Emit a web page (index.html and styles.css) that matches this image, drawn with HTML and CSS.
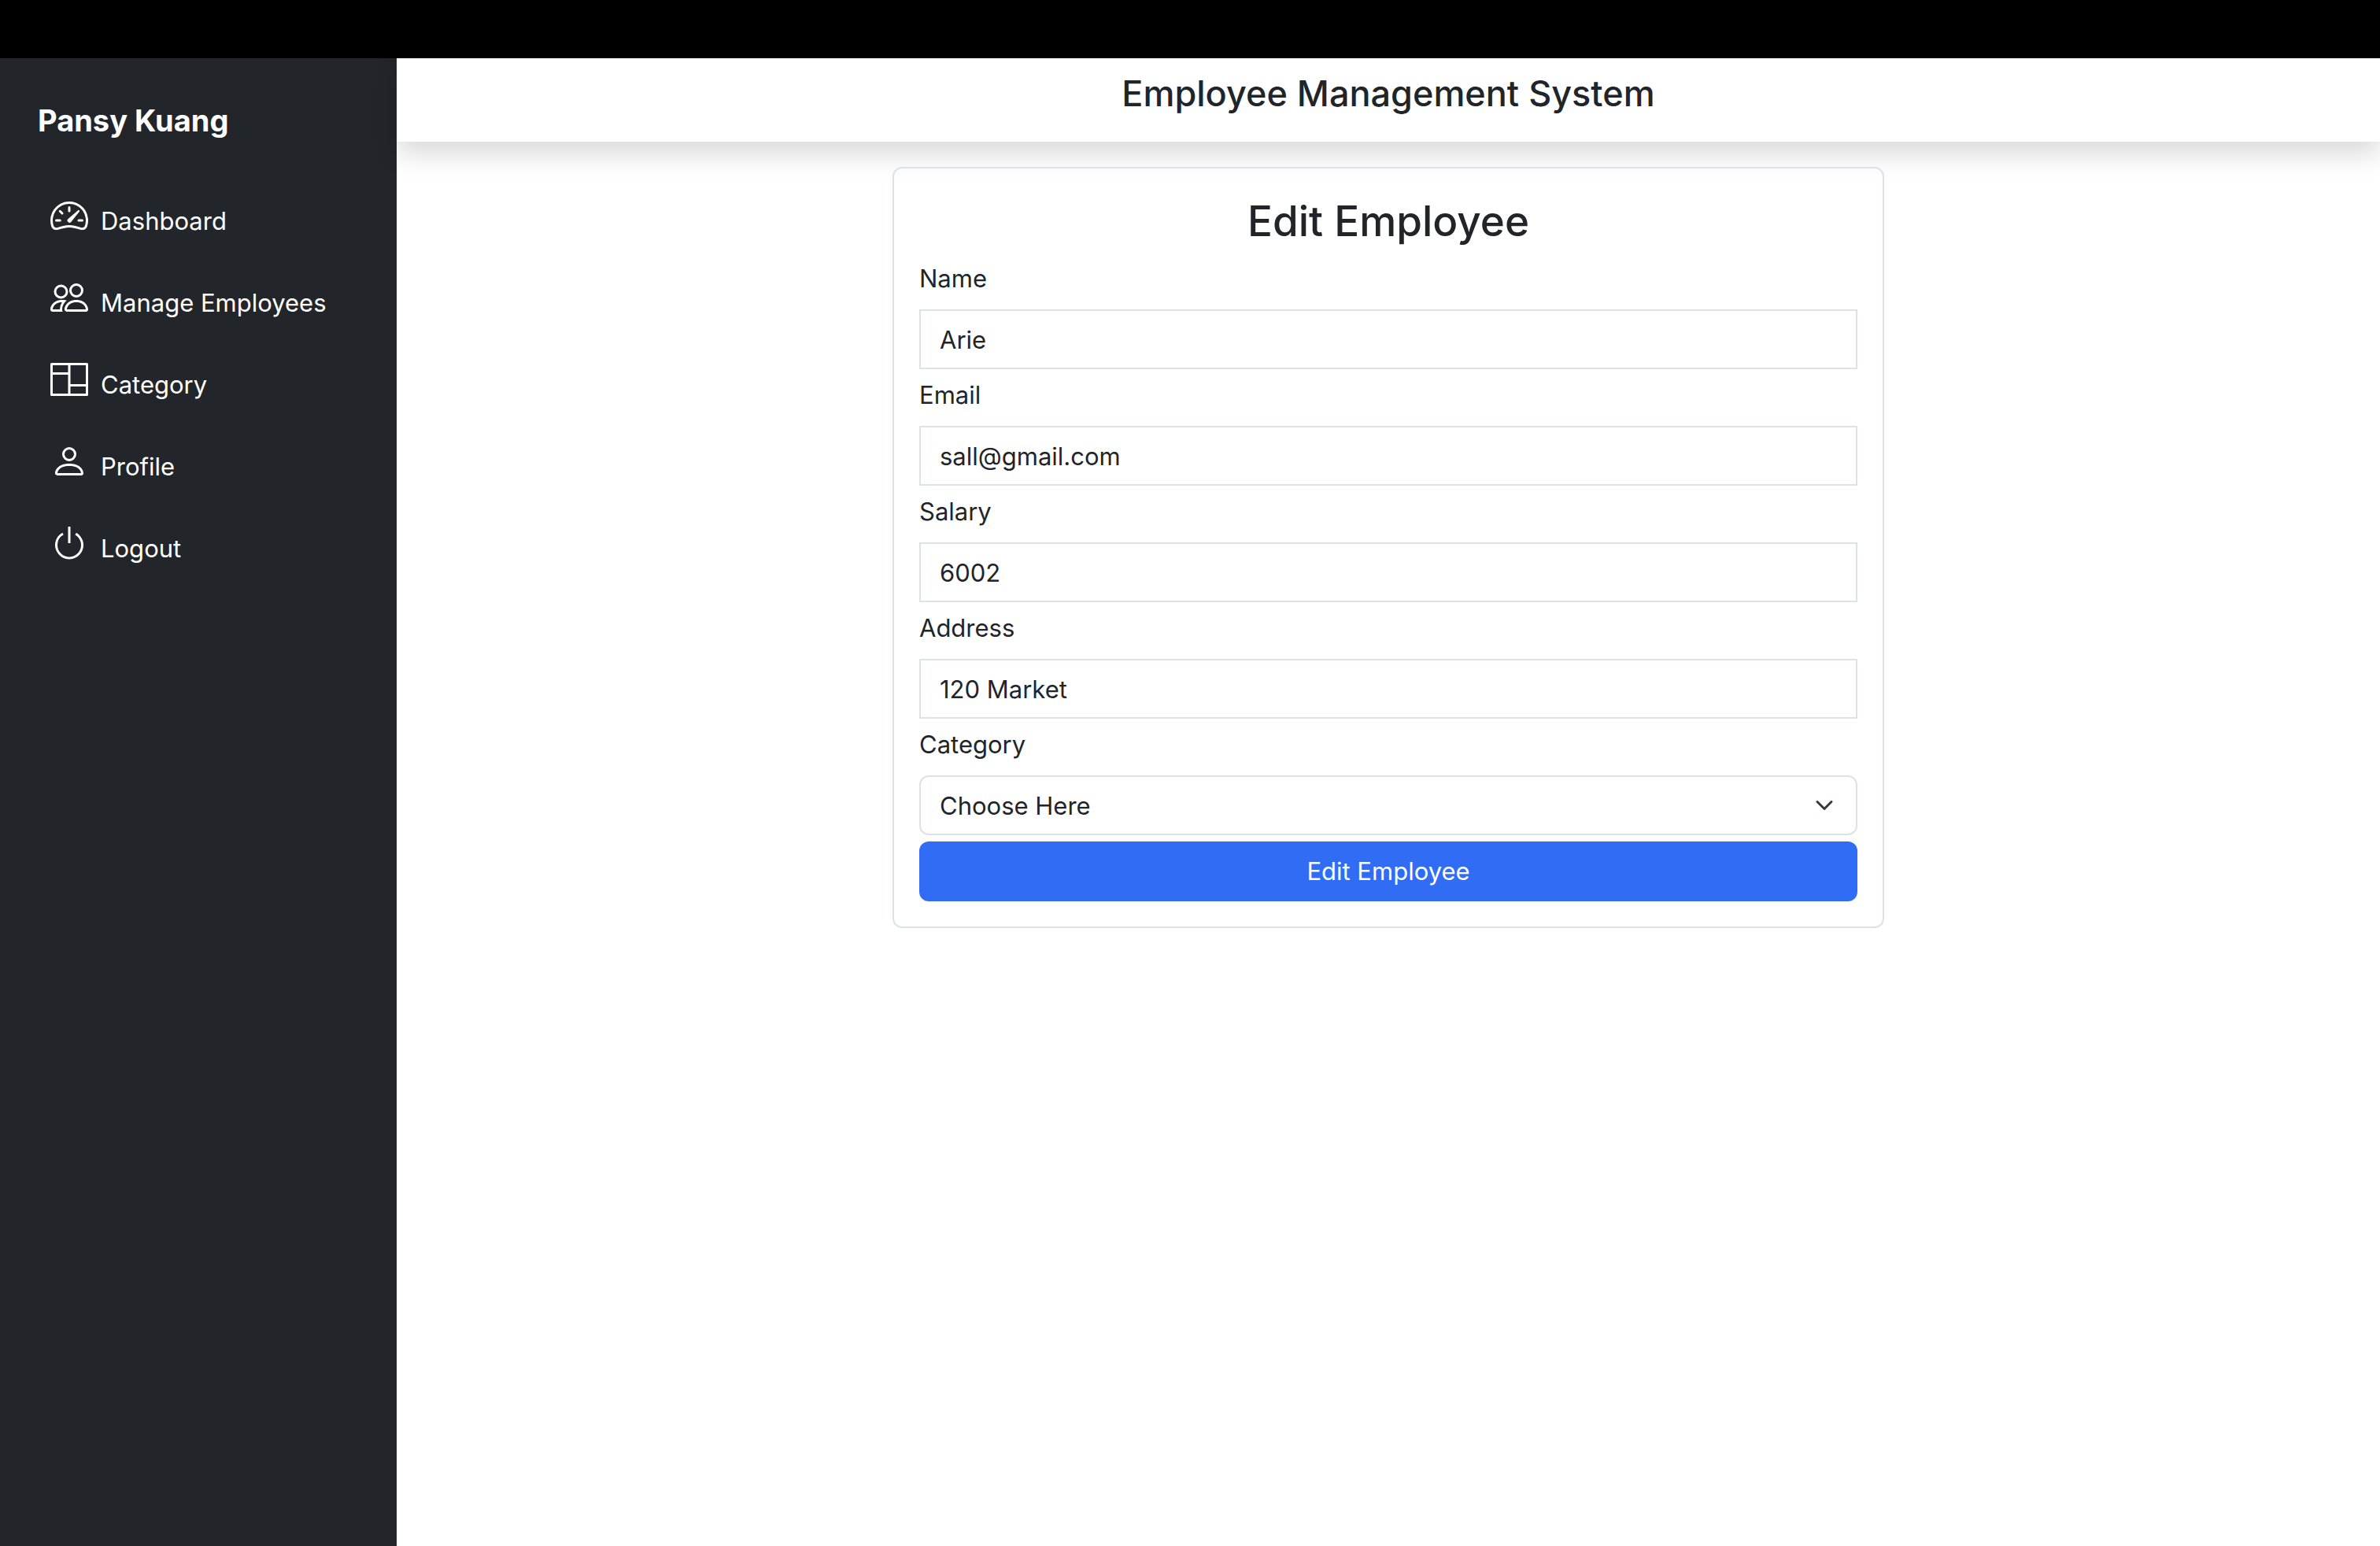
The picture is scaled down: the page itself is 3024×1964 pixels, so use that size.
FILE: index.html
```html
<!DOCTYPE html>
<html lang="en">
<head>
<meta charset="utf-8">
<title>Employee Management System</title>
<link rel="stylesheet" href="styles.css">
</head>
<body>
<div class="topbar"></div>
<div class="layout">
  <aside class="sidebar">
    <a class="brand" href="#">Pansy Kuang</a>
    <nav>
      <ul class="menu">
        <li><a class="menu-link" href="#">
          <svg class="icon" viewBox="0 0 16 16" aria-hidden="true"><path d="M8 4a.5.5 0 0 1 .5.5V6a.5.5 0 0 1-1 0V4.500A.5.5 0 0 1 8 4M3.732 5.732a.5.5 0 0 1 .707 0l.915.914a.5.5 0 1 1-.708.708l-.914-.915a.5.5 0 0 1 0-.707M2 10a.5.5 0 0 1 .5-.5h1.586a.5.5 0 0 1 0 1H2.500A.5.5 0 0 1 2 10m9.500 0a.5.5 0 0 1 .5-.5h1.500a.5.5 0 0 1 0 1H12a.5.5 0 0 1-.5-.5m.754-4.246a.39.39 0 0 0-.527-.02L7.547 9.310a.91.91 0 1 0 1.302 1.258l3.434-4.297a.39.39 0 0 0-.029-.518z"/><path fill-rule="evenodd" d="M0 10a8 8 0 1 1 15.547 2.661c-.442 1.253-1.845 1.602-2.932 1.250C11.309 13.488 9.475 13 8 13c-1.474 0-3.310.488-4.615.911-1.087.352-2.490.003-2.932-1.250A8 8 0 0 1 0 10m8-7a7 7 0 0 0-6.603 9.329c.203.575.923.876 1.680.630C4.397 12.533 6.358 12 8 12s3.604.532 4.923.960c.757.245 1.477-.056 1.680-.631A7 7 0 0 0 8 3"/></svg>
          <span class="menu-text">Dashboard</span></a></li>
        <li><a class="menu-link" href="#">
          <svg class="icon" viewBox="0 0 16 16" aria-hidden="true"><path d="M15 14s1 0 1-1-1-4-5-4-5 3-5 4 1 1 1 1zm-7.978-1L7 12.996c.001-.264.167-1.030.760-1.720C8.312 10.629 9.282 10 11 10c1.717 0 2.687.630 3.240 1.276.593.690.758 1.457.760 1.720l-.008.002-.014.002zM11 7a2 2 0 1 0 0-4 2 2 0 0 0 0 4m3-2a3 3 0 1 1-6 0 3 3 0 0 1 6 0M6.936 9.280a6 6 0 0 0-1.230-.247A7 7 0 0 0 5 9c-4 0-5 3-5 4q0 1 1 1h4.216A2.240 2.240 0 0 1 5 13c0-1.010.377-2.042 1.090-2.904.243-.294.526-.569.846-.816M4.920 10A5.500 5.500 0 0 0 4 13H1c0-.260.164-1.030.760-1.724.545-.636 1.492-1.256 3.160-1.275zM1.500 5.500a3 3 0 1 1 6 0 3 3 0 0 1-6 0m3-2a2 2 0 1 0 0 4 2 2 0 0 0 0-4"/></svg>
          <span class="menu-text">Manage Employees</span></a></li>
        <li><a class="menu-link" href="#">
          <svg class="icon" viewBox="0 0 16 16" aria-hidden="true"><path d="M0 1.500a.5.5 0 0 1 .5-.5h15a.5.5 0 0 1 .5.5v13a.5.5 0 0 1-.5.5H.500a.5.5 0 0 1-.5-.5zM8.500 2v8H15V2zm0 9v3H15v-3zm-1-9H1v3h6.500zM1 14h6.500V6H1z"/></svg>
          <span class="menu-text">Category</span></a></li>
        <li><a class="menu-link" href="#">
          <svg class="icon" viewBox="0 0 16 16" aria-hidden="true"><path d="M8 8a3 3 0 1 0 0-6 3 3 0 0 0 0 6m2-3a2 2 0 1 1-4 0 2 2 0 0 1 4 0m4 8c0 1-1 1-1 1H3s-1 0-1-1 1-4 6-4 6 3 6 4m-1-.004c-.001-.246-.154-.986-.832-1.664C11.516 10.680 10.289 10 8 10s-3.516.680-4.168 1.332c-.678.678-.830 1.418-.832 1.664z"/></svg>
          <span class="menu-text">Profile</span></a></li>
        <li><a class="menu-link" href="#">
          <svg class="icon" viewBox="0 0 16 16" aria-hidden="true"><path d="M7.500 1v7h1V1z"/><path d="M3 8.812a5 5 0 0 1 2.578-4.375l-.485-.874A6 6 0 1 0 11 3.616l-.501.865A5 5 0 1 1 3 8.812"/></svg>
          <span class="menu-text">Logout</span></a></li>
      </ul>
    </nav>
  </aside>
  <main class="main">
    <header class="header"><h1 class="header-title">Employee Management System</h1></header>
    <section class="card">
      <h2 class="card-title">Edit Employee</h2>
      <form class="form">
        <div class="field"><label for="name">Name</label><input class="control" id="name" type="text" value="Arie"></div>
        <div class="field"><label for="email">Email</label><input class="control" id="email" type="email" value="sall@gmail.com"></div>
        <div class="field"><label for="salary">Salary</label><input class="control" id="salary" type="text" value="6002"></div>
        <div class="field"><label for="address">Address</label><input class="control" id="address" type="text" value="120 Market"></div>
        <div class="field"><label for="category">Category</label><select class="control select" id="category"><option>Choose Here</option></select></div>
        <button class="submit" type="submit">Edit Employee</button>
      </form>
    </section>
  </main>
</div>
</body>
</html>
```
FILE: styles.css
```css
* {
  box-sizing: border-box;
}

body {
  display: flex;
  flex-direction: column;
  min-height: 100vh;
  margin: 0;
  background: #fff;
  color: #212529;
  font-family: Inter, "Liberation Sans", sans-serif;
  font-size: 31px;
  line-height: 50px;
}

.topbar {
  position: relative;
  z-index: 1;
  height: 74px;
  background: #000;
}

.layout {
  display: grid;
  grid-template-columns: 1fr 5fr;
  flex: 1;
}

.sidebar {
  padding: 48px 0;
  background: #22262a;
}

.brand {
  display: block;
  margin: 0 48px 38px;
  color: #fff;
  font-size: 38px;
  font-weight: 700;
  line-height: 62px;
  text-decoration: none;
}

.menu {
  margin: 0;
  padding: 0;
  list-style: none;
}

.menu-link {
  display: flex;
  align-items: center;
  gap: 16px;
  padding: 20px 16px 20px 64px;
  color: #fff;
  text-decoration: none;
  white-space: nowrap;
}

.menu-text {
  padding-top: 14px;
}

.icon {
  flex: none;
  width: 48px;
  height: 48px;
  fill: currentColor;
}

.header {
  padding: 16px 16px 32px;
  box-shadow: 0 16px 32px rgba(0, 0, 0, 0.15);
  text-align: center;
}

.header-title {
  margin: 0;
  font-size: 45px;
  font-weight: 500;
  line-height: 58px;
}

.card {
  width: 50%;
  margin: 32px auto 0;
  padding: 32px;
  border: 2px solid #dee2e6;
  border-radius: 12px;
}

.card-title {
  margin: 0 0 12px;
  font-size: 53px;
  font-weight: 500;
  line-height: 71px;
  text-align: center;
}

.form {
  display: grid;
  gap: 8px;
}

.field {
  display: grid;
  gap: 14px;
}

.control {
  width: 100%;
  height: 76px;
  padding: 12px 24px;
  border: 2px solid #dee2e6;
  border-radius: 0;
  background: #fff;
  color: inherit;
  font: inherit;
}

.select {
  appearance: none;
  border-radius: 12px;
  background: #fff url("data:image/svg+xml,%3csvg xmlns='http://www.w3.org/2000/svg' viewBox='0 0 16 16'%3e%3cpath fill='none' stroke='%23343a40' stroke-linecap='round' stroke-linejoin='round' stroke-width='2' d='m2 5 6 6 6-6'/%3e%3c/svg%3e") no-repeat right 24px center / 32px 24px;
}

.submit {
  height: 76px;
  padding: 12px 24px;
  border: 0;
  border-radius: 12px;
  background: #316cf4;
  color: #fff;
  font: inherit;
}
```
